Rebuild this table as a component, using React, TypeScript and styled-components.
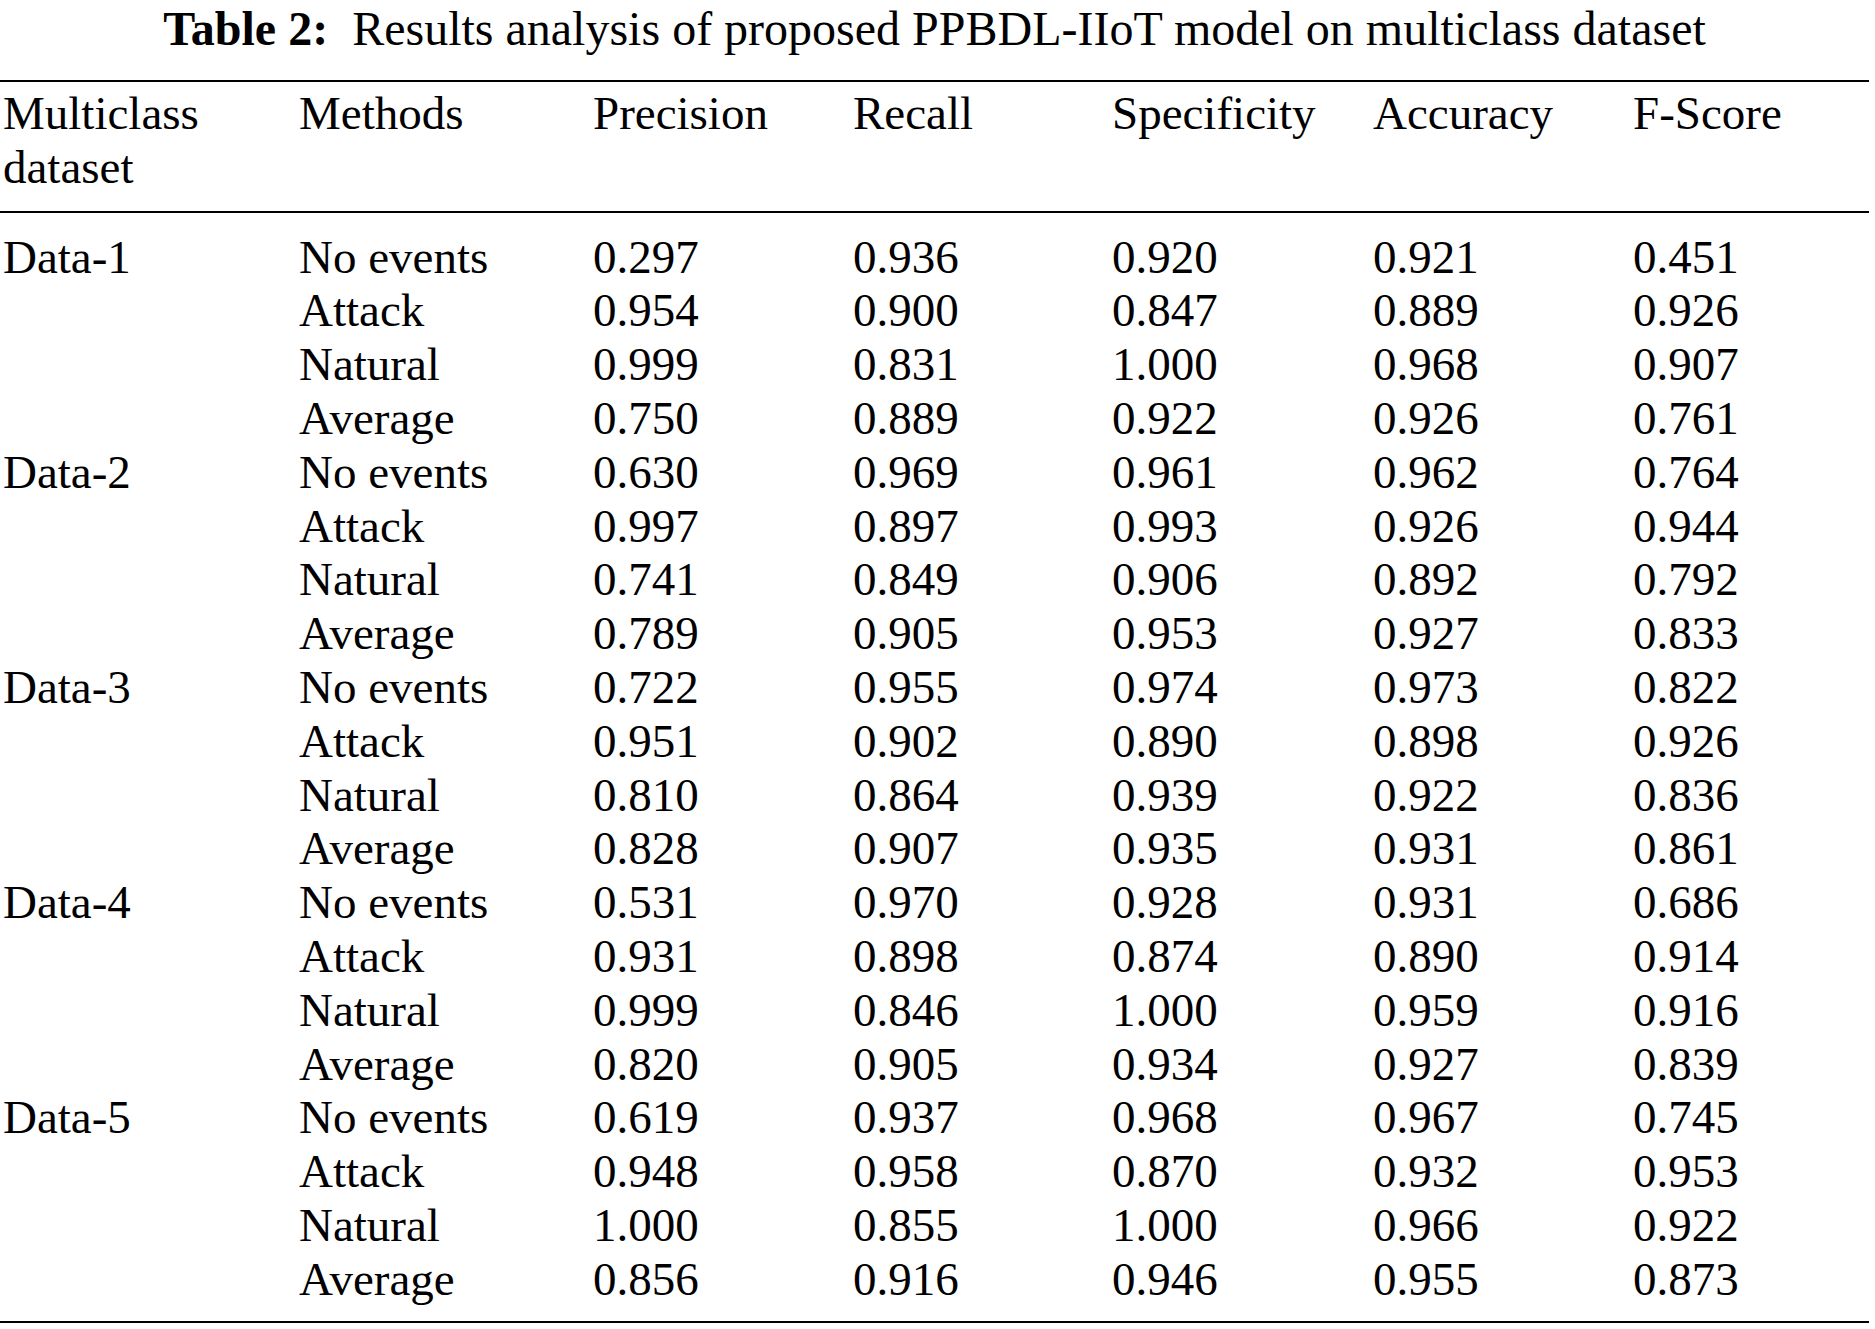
import React from 'react';
import styled, { createGlobalStyle } from 'styled-components';

const GlobalStyle = createGlobalStyle`
    html, body {
        margin: 0;
        padding: 0;
        background: #ffffff;
    }

    body {
        font-family: "Liberation Serif", "Times New Roman", serif;
        color: #000000;
    }
`;

const StyledPage = styled.div`
    width: 1869px;
    padding-top: 2px;
`;

const StyledCaption = styled.div`
    text-align: center;
    font-size: 48px;
    line-height: 54px;
    white-space: pre;
    padding-bottom: 24px;

    b {
        font-weight: 700;
    }
`;

const StyledTable = styled.div`
    border-top: 2px solid #000;
    border-bottom: 2px solid #000;
`;

const StyledHead = styled.div`
    border-bottom: 2px solid #000;
    padding: 5px 0 16px 3px;
`;

const StyledBody = styled.div`
    padding: 18px 0 14px 3px;
`;

const StyledRow = styled.div`
    display: grid;
    grid-template-columns: 296px 294px 260px 259px 261px 260px 236px;
    font-size: 47px;
    line-height: 53.8px;
`;

const StyledCell = styled.div`
    white-space: nowrap;
`;

const StyledHeadCell = styled.div`
    white-space: normal;
`;

interface GroupProps {
    name: string,
    rows: [string, string, string, string, string, string][],
}

const groups: GroupProps[] = [
    {
        name: 'Data-1',
        rows: [
            ['No events', '0.297', '0.936', '0.920', '0.921', '0.451'],
            ['Attack', '0.954', '0.900', '0.847', '0.889', '0.926'],
            ['Natural', '0.999', '0.831', '1.000', '0.968', '0.907'],
            ['Average', '0.750', '0.889', '0.922', '0.926', '0.761'],
        ],
    },
    {
        name: 'Data-2',
        rows: [
            ['No events', '0.630', '0.969', '0.961', '0.962', '0.764'],
            ['Attack', '0.997', '0.897', '0.993', '0.926', '0.944'],
            ['Natural', '0.741', '0.849', '0.906', '0.892', '0.792'],
            ['Average', '0.789', '0.905', '0.953', '0.927', '0.833'],
        ],
    },
    {
        name: 'Data-3',
        rows: [
            ['No events', '0.722', '0.955', '0.974', '0.973', '0.822'],
            ['Attack', '0.951', '0.902', '0.890', '0.898', '0.926'],
            ['Natural', '0.810', '0.864', '0.939', '0.922', '0.836'],
            ['Average', '0.828', '0.907', '0.935', '0.931', '0.861'],
        ],
    },
    {
        name: 'Data-4',
        rows: [
            ['No events', '0.531', '0.970', '0.928', '0.931', '0.686'],
            ['Attack', '0.931', '0.898', '0.874', '0.890', '0.914'],
            ['Natural', '0.999', '0.846', '1.000', '0.959', '0.916'],
            ['Average', '0.820', '0.905', '0.934', '0.927', '0.839'],
        ],
    },
    {
        name: 'Data-5',
        rows: [
            ['No events', '0.619', '0.937', '0.968', '0.967', '0.745'],
            ['Attack', '0.948', '0.958', '0.870', '0.932', '0.953'],
            ['Natural', '1.000', '0.855', '1.000', '0.966', '0.922'],
            ['Average', '0.856', '0.916', '0.946', '0.955', '0.873'],
        ],
    },
];

const headers = ['Multiclass dataset', 'Methods', 'Precision', 'Recall', 'Specificity', 'Accuracy', 'F-Score'];

export default function App() {
    return (
        <StyledPage>
            <GlobalStyle />
            <StyledCaption>
                <b>Table 2:</b>{'  '}Results analysis of proposed PPBDL-IIoT model on multiclass dataset
            </StyledCaption>
            <StyledTable>
                <StyledHead>
                    <StyledRow>
                        {headers.map(header => (
                            <StyledHeadCell key={header}>
                                {header === 'Multiclass dataset' ? <>Multiclass<br />dataset</> : header}
                            </StyledHeadCell>
                        ))}
                    </StyledRow>
                </StyledHead>
                <StyledBody>
                    {groups.map(group => group.rows.map((row, index) => (
                        <StyledRow key={`${group.name}-${row[0]}`}>
                            <StyledCell>{index === 0 ? group.name : ''}</StyledCell>
                            {row.map((value, column) => (
                                <StyledCell key={column}>{value}</StyledCell>
                            ))}
                        </StyledRow>
                    )))}
                </StyledBody>
            </StyledTable>
        </StyledPage>
    );
}
